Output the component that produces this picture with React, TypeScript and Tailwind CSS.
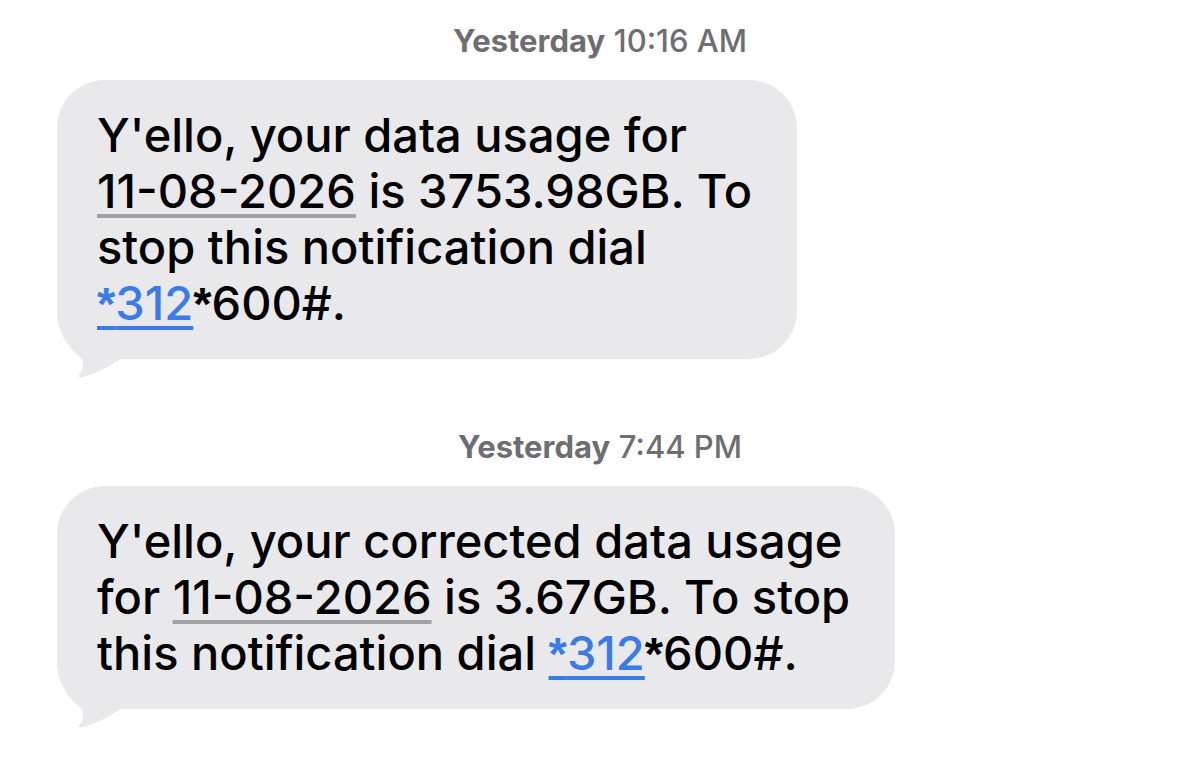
import React from 'react'

function Tail() {
  return (
    <svg className="absolute left-0 bottom-[-20px]" width="70" height="70" viewBox="0 0 70 70">
      <path
        d="M0 0 L0 6 C2 30 16 42 25 50 C27 56 26 62 22 66 C21 68 23 69 26 68 C40 64 52 58 66 48 L66 0 Z"
        fill="#e9e9eb"
      />
    </svg>
  )
}

function Stamp({ day, time }: { day: string; time: string }) {
  return (
    <p className="text-center text-[31px] text-[#6d6d72] leading-none">
      <span className="font-bold">{day}</span>{' '}
      <span className="font-medium">{time}</span>
    </p>
  )
}

function Bubble({ children }: { children: React.ReactNode }) {
  return (
    <div className="relative w-fit">
      <div className="relative z-10 rounded-[48px] bg-[#e9e9eb] pl-[40px] pr-[45px] pt-[27px] pb-[27px] text-[47px] leading-[56px] font-[550] text-black whitespace-nowrap">
        {children}
      </div>
      <Tail />
    </div>
  )
}

function Star() {
  return <span style={{ fontFamily: '"Liberation Sans", sans-serif' }}>*</span>
}

const dateCls = 'underline decoration-[#a2a2a6] decoration-[4px] underline-offset-[6px]'
const linkCls = 'text-[#3a7bea] underline decoration-[#3a7bea] decoration-[4px] underline-offset-[6px]'

export default function App() {
  return (
    <div className="w-[1200px] h-[759px] bg-white overflow-hidden" style={{ fontFamily: 'Inter, "Noto Sans", sans-serif' }}>
      <div className="flex flex-col pl-[57px] pt-[25px]">
        <div className="w-[1086px]"><Stamp day="Yesterday" time="10:16 AM" /></div>
        <div className="mt-[24px]">
          <Bubble>
            Y'ello, your data usage for<br />
            <span className={dateCls}>11-08-2026</span> is 3753.98GB. To<br />
            stop this notification dial<br />
            <span className={linkCls}><Star />312</span><Star />600#.
          </Bubble>
        </div>
        <div className="w-[1086px] mt-[72px]"><Stamp day="Yesterday" time="7:44 PM" /></div>
        <div className="mt-[24px]">
          <Bubble>
            Y'ello, your corrected data usage<br />
            for <span className={dateCls}>11-08-2026</span> is 3.67GB. To stop<br />
            this notification dial <span className={linkCls}><Star />312</span><Star />600#.
          </Bubble>
        </div>
      </div>
    </div>
  )
}
